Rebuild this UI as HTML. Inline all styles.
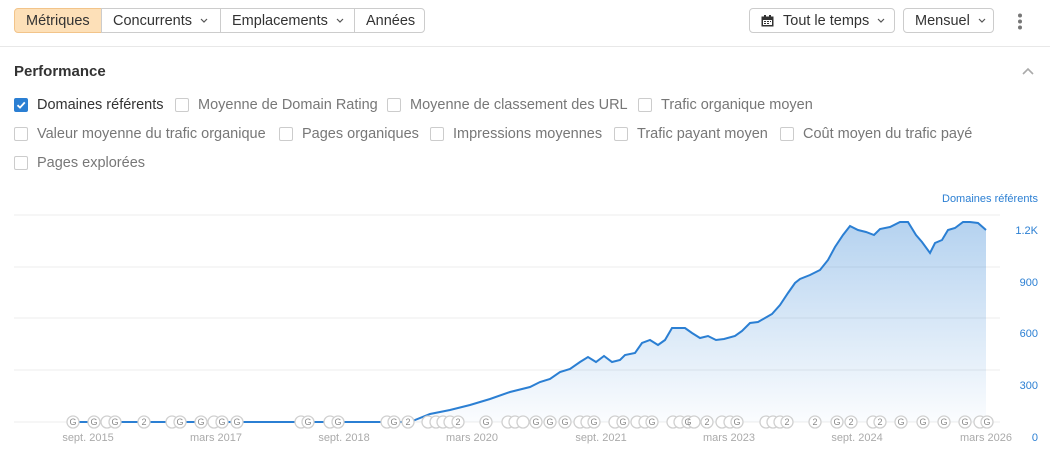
<!DOCTYPE html>
<html><head><meta charset="utf-8"><style>
body{margin:0;width:1050px;height:456px;background:#fff;font-family:"Liberation Sans",sans-serif;color:#333;position:relative;overflow:hidden}
.btn{position:absolute;top:8px;height:25px;border:1px solid #ccc;box-sizing:border-box;font-size:14.5px;color:#333;padding:0 11px;background:#fff;display:flex;align-items:center;white-space:nowrap}
.cb{position:absolute;font-size:14.5px;color:#777;display:flex;align-items:center;white-space:nowrap}
.cb i{display:inline-block;width:12px;height:12px;border:1px solid #ccc;border-radius:2px;margin-right:9px}
.cv{margin-left:8px;flex-shrink:0}
</style></head><body>
<div class="btn" style="left:14px;width:88px;background:#fde0b8;border-color:#f2c48a;border-radius:4px 0 0 4px">Métriques</div>
<div class="btn" style="left:101px;width:120px">Concurrents <svg class="cv" width="8" height="5"><path d="M1 1L4 4L7 1" stroke="#555" stroke-width="1.2" fill="none"/></svg></div>
<div class="btn" style="left:220px;width:135px">Emplacements <svg class="cv" width="8" height="5"><path d="M1 1L4 4L7 1" stroke="#555" stroke-width="1.2" fill="none"/></svg></div>
<div class="btn" style="left:354px;width:71px;border-radius:0 4px 4px 0">Années</div>
<div class="btn" style="left:749px;width:146px;border-radius:4px;padding-left:11px">
<svg width="13" height="12" style="margin-right:9px;flex-shrink:0"><rect x="0.5" y="1.5" width="12" height="10" fill="#333"/><rect x="2" y="5" width="9" height="5" fill="#fff"/><rect x="3" y="0" width="2" height="3" fill="#333"/><rect x="8" y="0" width="2" height="3" fill="#333"/><g fill="#333"><rect x="3" y="6" width="2" height="1"/><rect x="6" y="6" width="2" height="1"/><rect x="9" y="6" width="1" height="1"/><rect x="3" y="8" width="2" height="1"/><rect x="6" y="8" width="2" height="1"/></g></svg>Tout le temps <svg class="cv" width="8" height="5"><path d="M1 1L4 4L7 1" stroke="#555" stroke-width="1.2" fill="none"/></svg></div>
<div class="btn" style="left:903px;width:91px;border-radius:4px">Mensuel <svg class="cv" width="8" height="5"><path d="M1 1L4 4L7 1" stroke="#555" stroke-width="1.2" fill="none"/></svg></div>
<svg style="position:absolute;left:1016px;top:13px" width="8" height="18"><circle cx="4" cy="2.5" r="2" fill="#777"/><circle cx="4" cy="8.5" r="2" fill="#777"/><circle cx="4" cy="14.5" r="2" fill="#777"/></svg>
<div style="position:absolute;left:0;top:46px;width:1050px;height:1px;background:#e8e8e8"></div>
<div style="position:absolute;left:14px;top:63px;font-size:15px;font-weight:bold;color:#333">Performance</div>
<svg style="position:absolute;left:1021px;top:67px" width="14" height="9"><path d="M2 7L7 2L12 7" stroke="#aaa" stroke-width="1.6" fill="none"/></svg>
<div class="cb" style="left:14px;top:97px;color:#333"><i style="background:#2b7fd3;border-color:#2b7fd3;position:relative"><svg width="12" height="12" style="position:absolute;left:0;top:0"><path d="M2.5 6.2L5 8.6L9.8 3.4" stroke="#fff" stroke-width="1.8" fill="none"/></svg></i>Domaines référents</div>
<div class="cb" style="left:175px;top:97px"><i></i>Moyenne de Domain Rating</div>
<div class="cb" style="left:387px;top:97px"><i></i>Moyenne de classement des URL</div>
<div class="cb" style="left:638px;top:97px"><i></i>Trafic organique moyen</div>
<div class="cb" style="left:14px;top:126px"><i></i>Valeur moyenne du trafic organique</div>
<div class="cb" style="left:279px;top:126px"><i></i>Pages organiques</div>
<div class="cb" style="left:430px;top:126px"><i></i>Impressions moyennes</div>
<div class="cb" style="left:614px;top:126px"><i></i>Trafic payant moyen</div>
<div class="cb" style="left:780px;top:126px"><i></i>Coût moyen du trafic payé</div>
<div class="cb" style="left:14px;top:155px"><i></i>Pages explorées</div>
<svg style="position:absolute;left:0;top:185px" width="1050" height="271" font-family="Liberation Sans,sans-serif">
<defs><linearGradient id="g" x1="0" y1="0" x2="0" y2="1"><stop offset="0" stop-color="#2b7fd3" stop-opacity="0.35"/><stop offset="1" stop-color="#2b7fd3" stop-opacity="0.02"/></linearGradient></defs>
<text x="1038" y="17" font-size="11" fill="#2b7fd3" text-anchor="end">Domaines référents</text>
<g stroke="#ececec" stroke-width="1"><line x1="14" x2="1000" y1="30" y2="30"/><line x1="14" x2="1000" y1="82" y2="82"/><line x1="14" x2="1000" y1="133" y2="133"/><line x1="14" x2="1000" y1="185" y2="185"/><line x1="14" x2="1000" y1="237" y2="237"/></g>
<g font-size="11" fill="#2b7fd3" text-anchor="end"><text x="1038" y="49">1.2K</text><text x="1038" y="101">900</text><text x="1038" y="152">600</text><text x="1038" y="204">300</text><text x="1038" y="256">0</text></g>
<g transform="translate(0,-185)">
<path d="M410 420L430 414L450 410L470 405L490 399L510 392L530 387L540 382L550 379L560 372L570 369L580 362L588 357L596 362L604 356L612 362L620 360L625 355L635 353L642 343L650 340L658 345L665 340L672 328L685 328L692 333L700 338L708 336L716 340L724 339L735 336L742 331L750 323L758 322L765 318L772 314L780 305L788 293L795 283L800 279L810 275L820 270L828 260L835 247L843 235L850 226L858 230L866 232L874 235L880 229L890 227L900 222L908 222L916 235L922 242L930 253L935 243L942 240L948 230L955 228L963 222L970 222L978 223L986 230L986 422L410 422Z" fill="url(#g)"/>
<path d="M70 422L410 422L430 414L450 410L470 405L490 399L510 392L530 387L540 382L550 379L560 372L570 369L580 362L588 357L596 362L604 356L612 362L620 360L625 355L635 353L642 343L650 340L658 345L665 340L672 328L685 328L692 333L700 338L708 336L716 340L724 339L735 336L742 331L750 323L758 322L765 318L772 314L780 305L788 293L795 283L800 279L810 275L820 270L828 260L835 247L843 235L850 226L858 230L866 232L874 235L880 229L890 227L900 222L908 222L916 235L922 242L930 253L935 243L942 240L948 230L955 228L963 222L970 222L978 223L986 230" fill="none" stroke="#2b7fd3" stroke-width="2"/>
</g>
<g transform="translate(0,-185)" font-size="9" fill="#999" text-anchor="middle">
<g stroke="#d0d0d0" stroke-width="1.3" fill="#fff">
<circle cx="73" cy="422" r="6"/><circle cx="94" cy="422" r="6"/><circle cx="107" cy="422" r="6"/><circle cx="115" cy="422" r="6"/><circle cx="144" cy="422" r="6"/><circle cx="172" cy="422" r="6"/><circle cx="180" cy="422" r="6"/><circle cx="201" cy="422" r="6"/><circle cx="214" cy="422" r="6"/><circle cx="222" cy="422" r="6"/><circle cx="237" cy="422" r="6"/><circle cx="301" cy="422" r="6"/><circle cx="308" cy="422" r="6"/><circle cx="330" cy="422" r="6"/><circle cx="338" cy="422" r="6"/><circle cx="387" cy="422" r="6"/><circle cx="394" cy="422" r="6"/><circle cx="408" cy="422" r="6"/><circle cx="428" cy="422" r="6"/><circle cx="436" cy="422" r="6"/><circle cx="443" cy="422" r="6"/><circle cx="450" cy="422" r="6"/><circle cx="458" cy="422" r="6"/><circle cx="486" cy="422" r="6"/><circle cx="508" cy="422" r="6"/><circle cx="515" cy="422" r="6"/><circle cx="523" cy="422" r="6"/><circle cx="536" cy="422" r="6"/><circle cx="550" cy="422" r="6"/><circle cx="565" cy="422" r="6"/><circle cx="580" cy="422" r="6"/><circle cx="587" cy="422" r="6"/><circle cx="594" cy="422" r="6"/><circle cx="615" cy="422" r="6"/><circle cx="623" cy="422" r="6"/><circle cx="637" cy="422" r="6"/><circle cx="645" cy="422" r="6"/><circle cx="652" cy="422" r="6"/><circle cx="673" cy="422" r="6"/><circle cx="680" cy="422" r="6"/><circle cx="688" cy="422" r="6"/><circle cx="694" cy="422" r="6"/><circle cx="707" cy="422" r="6"/><circle cx="722" cy="422" r="6"/><circle cx="730" cy="422" r="6"/><circle cx="737" cy="422" r="6"/><circle cx="766" cy="422" r="6"/><circle cx="773" cy="422" r="6"/><circle cx="780" cy="422" r="6"/><circle cx="787" cy="422" r="6"/><circle cx="815" cy="422" r="6"/><circle cx="837" cy="422" r="6"/><circle cx="851" cy="422" r="6"/><circle cx="873" cy="422" r="6"/><circle cx="880" cy="422" r="6"/><circle cx="901" cy="422" r="6"/><circle cx="923" cy="422" r="6"/><circle cx="944" cy="422" r="6"/><circle cx="965" cy="422" r="6"/><circle cx="980" cy="422" r="6"/><circle cx="987" cy="422" r="6"/>
</g>
<g fill="#888" font-size="9"><text x="73" y="425">G</text><text x="94" y="425">G</text><text x="115" y="425">G</text><text x="144" y="425">2</text><text x="180" y="425">G</text><text x="201" y="425">G</text><text x="222" y="425">G</text><text x="237" y="425">G</text><text x="308" y="425">G</text><text x="338" y="425">G</text><text x="394" y="425">G</text><text x="408" y="425">2</text><text x="458" y="425">2</text><text x="486" y="425">G</text><text x="536" y="425">G</text><text x="550" y="425">G</text><text x="565" y="425">G</text><text x="594" y="425">G</text><text x="623" y="425">G</text><text x="652" y="425">G</text><text x="688" y="425">G</text><text x="707" y="425">2</text><text x="737" y="425">G</text><text x="787" y="425">2</text><text x="815" y="425">2</text><text x="837" y="425">G</text><text x="851" y="425">2</text><text x="880" y="425">2</text><text x="901" y="425">G</text><text x="923" y="425">G</text><text x="944" y="425">G</text><text x="965" y="425">G</text><text x="987" y="425">G</text></g>
<g fill="#aaa" font-size="11"><text x="88" y="441">sept. 2015</text><text x="216" y="441">mars 2017</text><text x="344" y="441">sept. 2018</text><text x="472" y="441">mars 2020</text><text x="601" y="441">sept. 2021</text><text x="729" y="441">mars 2023</text><text x="857" y="441">sept. 2024</text><text x="986" y="441">mars 2026</text></g>
</g>
</svg>
</body></html>
